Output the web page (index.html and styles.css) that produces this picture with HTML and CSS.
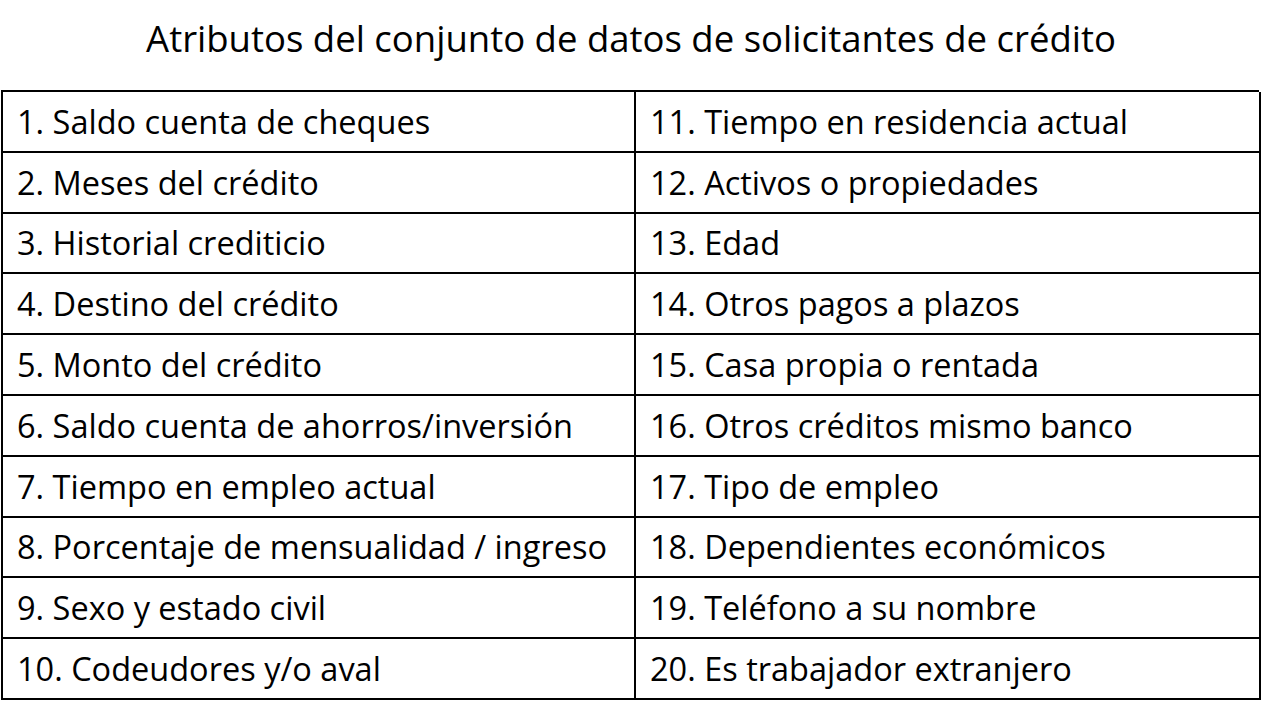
FILE: index.html
```html
<!DOCTYPE html>
<html lang="es">
<head>
<meta charset="utf-8">
<title>Atributos</title>
<link rel="stylesheet" href="styles.css">
</head>
<body>
<div class="page">
  <h1 class="title">Atributos del conjunto de datos de solicitantes de crédito</h1>
  <div class="grid">
    <div class="cell">1. Saldo cuenta de cheques</div>
    <div class="cell">11. Tiempo en residencia actual</div>
    <div class="cell">2. Meses del crédito</div>
    <div class="cell">12. Activos o propiedades</div>
    <div class="cell">3. Historial crediticio</div>
    <div class="cell">13. Edad</div>
    <div class="cell">4. Destino del crédito</div>
    <div class="cell">14. Otros pagos a plazos</div>
    <div class="cell">5. Monto del crédito</div>
    <div class="cell">15. Casa propia o rentada</div>
    <div class="cell">6. Saldo cuenta de ahorros/inversión</div>
    <div class="cell">16. Otros créditos mismo banco</div>
    <div class="cell">7. Tiempo en empleo actual</div>
    <div class="cell">17. Tipo de empleo</div>
    <div class="cell">8. Porcentaje de mensualidad / ingreso</div>
    <div class="cell">18. Dependientes económicos</div>
    <div class="cell">9. Sexo y estado civil</div>
    <div class="cell">19. Teléfono a su nombre</div>
    <div class="cell">10. Codeudores y/o aval</div>
    <div class="cell">20. Es trabajador extranjero</div>
  </div>
</div>
</body>
</html>
```

FILE: styles.css
```css
html, body {
  margin: 0;
  padding: 0;
  background: #ffffff;
}
.page {
  width: 1262px;
  height: 714px;
  font-family: "Open Sans", Lato, sans-serif;
  color: #000;
}
.title {
  margin: 0;
  height: 90px;
  box-sizing: border-box;
  padding-top: 16px;
  text-align: center;
  font-weight: normal;
  font-size: 36.5px;
  line-height: 44px;
  white-space: nowrap;
}
.grid {
  margin-left: 1px;
  width: 1258px;
  display: grid;
  grid-template-columns: 633px 625px;
  grid-auto-rows: 60.8px;
  border-top: 2px solid #000;
  border-left: 2px solid #000;
  box-sizing: border-box;
}
.cell {
  box-sizing: border-box;
  border-right: 2px solid #000;
  border-bottom: 2px solid #000;
  display: flex;
  align-items: center;
  padding-left: 14px;
  font-size: 32.5px;
  white-space: nowrap;
}
```
